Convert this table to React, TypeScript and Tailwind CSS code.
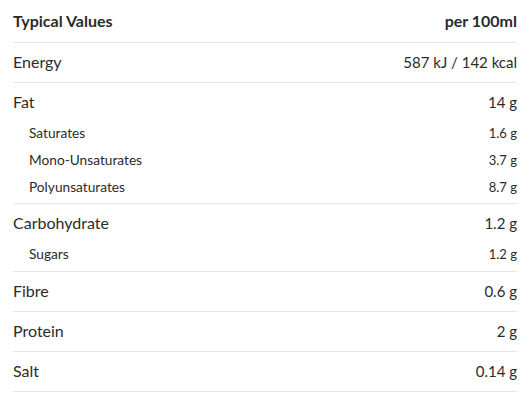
interface Nutrient {
  label: string;
  value: string;
  subs?: { label: string; value: string }[];
  tail?: string;
}

const NUTRIENTS: Nutrient[] = [
  { label: 'Energy', value: '587 kJ / 142 kcal' },
  {
    label: 'Fat',
    value: '14 g',
    subs: [
      { label: 'Saturates', value: '1.6 g' },
      { label: 'Mono-Unsaturates', value: '3.7 g' },
      { label: 'Polyunsaturates', value: '8.7 g' },
    ],
    tail: 'pb-[2px]',
  },
  {
    label: 'Carbohydrate',
    value: '1.2 g',
    subs: [{ label: 'Sugars', value: '1.2 g' }],
    tail: 'pb-[3px]',
  },
  { label: 'Fibre', value: '0.6 g' },
  { label: 'Protein', value: '2 g' },
  { label: 'Salt', value: '0.14 g' },
];

function NutrientRow({ item }: { item: Nutrient }) {
  return (
    <div className="border-b border-[#e6e6ea]">
      <div className="flex h-[39px] items-center justify-between pb-[1px]">
        <span className="text-[16px]">{item.label}</span>
        <span className="text-[15px]">{item.value}</span>
      </div>
      {item.subs && (
        <div className={`-mt-[2px] ${item.tail}`}>
          {item.subs.map((s) => (
            <div key={s.label} className="flex h-[27px] items-center justify-between pl-4">
              <span className="text-[13.7px]">{s.label}</span>
              <span className="text-[13px]">{s.value}</span>
            </div>
          ))}
        </div>
      )}
    </div>
  );
}

export default function App() {
  return (
    <div
      className="w-[531px] bg-white pl-[13px] pr-[14px] text-[#2b2b2b]"
      style={{ fontFamily: 'Lato, "Noto Sans", sans-serif' }}
    >
      <div className="flex h-[43px] items-center justify-between border-b border-[#e6e6ea] pb-[1px] text-[16px] font-bold">
        <span>Typical Values</span>
        <span>per 100ml</span>
      </div>
      {NUTRIENTS.map((n) => (
        <NutrientRow key={n.label} item={n} />
      ))}
    </div>
  );
}
